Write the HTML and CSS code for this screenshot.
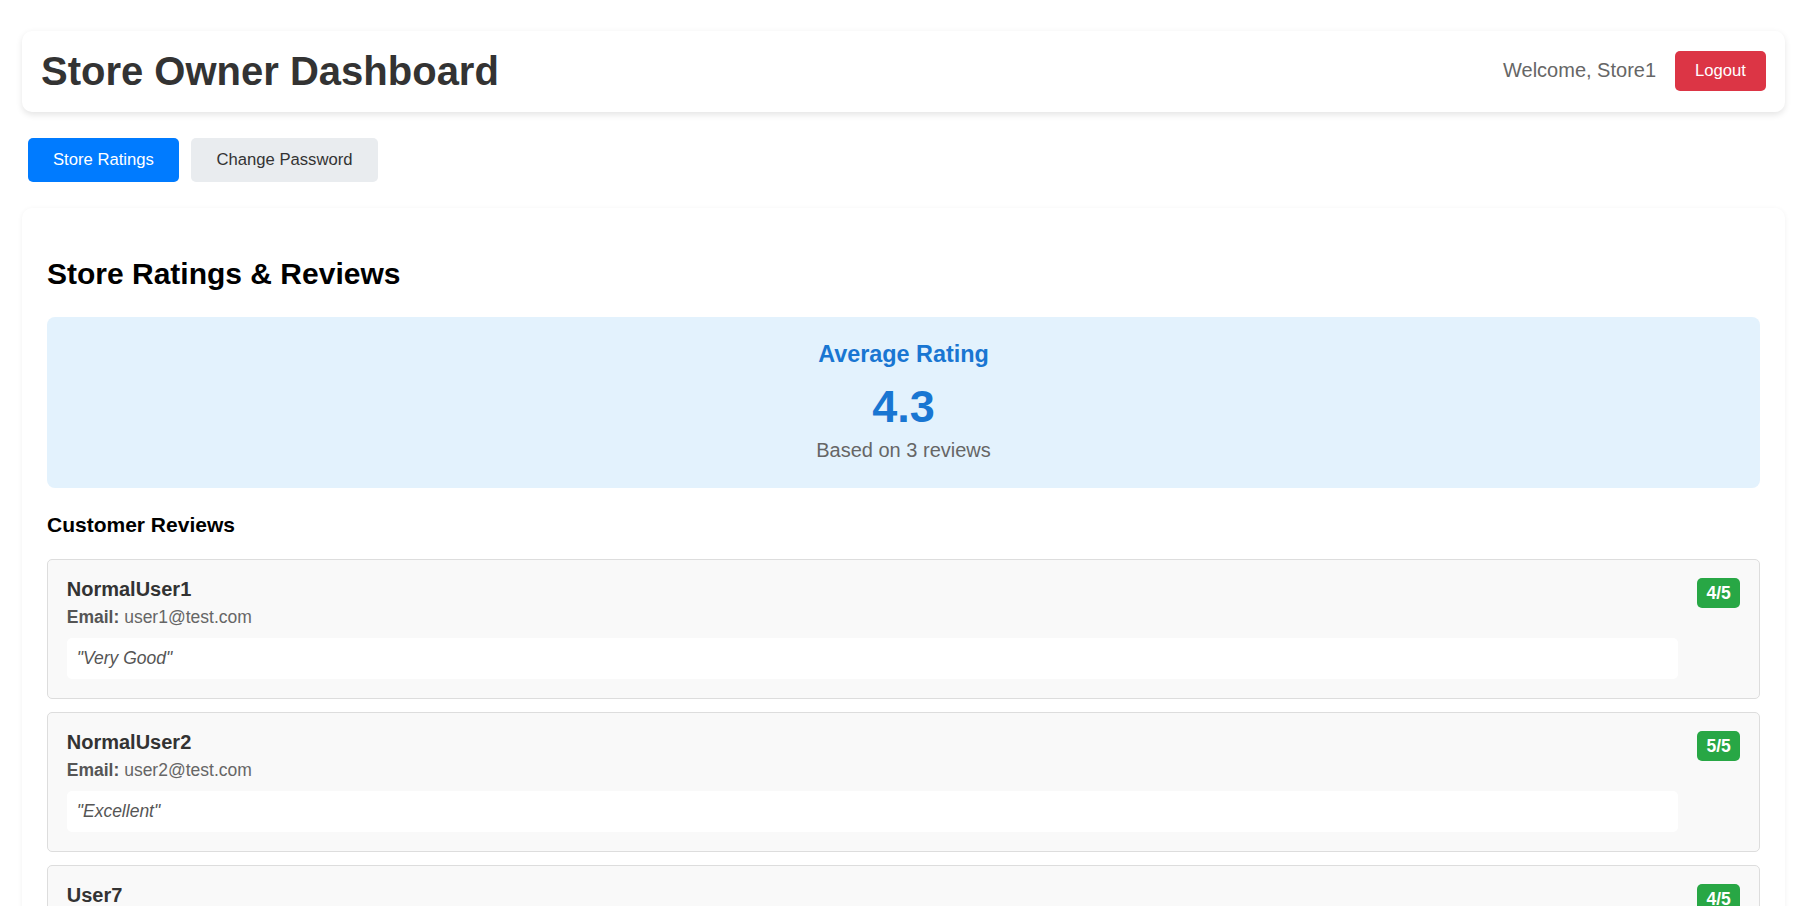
FILE: index.html
```html
<!DOCTYPE html>
<html lang="en">
<head>
<meta charset="utf-8">
<title>Store Owner Dashboard</title>
<link rel="stylesheet" href="styles.css">
</head>
<body>
<div class="page">
  <header class="topbar">
    <h1 class="title">Store Owner Dashboard</h1>
    <div class="user-area">
      <span class="welcome">Welcome, Store1</span>
      <button class="btn-logout">Logout</button>
    </div>
  </header>

  <nav class="tabs">
    <button class="tab tab-active">Store Ratings</button>
    <button class="tab">Change Password</button>
  </nav>

  <main class="panel">
    <h2 class="panel-title">Store Ratings &amp; Reviews</h2>

    <section class="summary">
      <h3 class="summary-label">Average Rating</h3>
      <div class="summary-value">4.3</div>
      <p class="summary-sub">Based on 3 reviews</p>
    </section>

    <h3 class="reviews-title">Customer Reviews</h3>

    <div class="reviews">
      <div class="review">
        <div class="review-body">
          <h4 class="review-name">NormalUser1</h4>
          <p class="review-email"><strong>Email:</strong> user1@test.com</p>
          <p class="review-comment">"Very Good"</p>
        </div>
        <span class="badge">4/5</span>
      </div>
      <div class="review">
        <div class="review-body">
          <h4 class="review-name">NormalUser2</h4>
          <p class="review-email"><strong>Email:</strong> user2@test.com</p>
          <p class="review-comment">"Excellent"</p>
        </div>
        <span class="badge">5/5</span>
      </div>
      <div class="review">
        <div class="review-body">
          <h4 class="review-name">User7</h4>
          <p class="review-email"><strong>Email:</strong> user7@test.com</p>
          <p class="review-comment">"Good"</p>
        </div>
        <span class="badge">4/5</span>
      </div>
    </div>
  </main>
</div>
</body>
</html>
```

FILE: styles.css
```css
* {
  box-sizing: border-box;
}

html, body {
  margin: 0;
  padding: 0;
  background: #ffffff;
}

body {
  font-family: "Liberation Sans", Arial, Helvetica, sans-serif;
  color: #000;
}

.page {
  padding: 31px 31px 40px 22px;
}

.topbar {
  display: flex;
  align-items: center;
  justify-content: space-between;
  background: #fff;
  border-radius: 10px;
  box-shadow: 0 2.5px 6px rgba(0, 0, 0, 0.1);
  padding: 17px 19px 18px;
  margin-bottom: 26px;
}

.title {
  margin: 0;
  font-size: 40px;
  line-height: 46px;
  font-weight: 700;
  color: #333;
}

.user-area {
  display: flex;
  align-items: center;
  gap: 19px;
}

.welcome {
  font-size: 20px;
  color: #666;
}

.btn-logout {
  font-family: inherit;
  font-size: 16.67px;
  line-height: 19.2px;
  color: #fff;
  background: #dc3545;
  border: none;
  border-radius: 5px;
  padding: 10px 20px;
}

.tabs {
  display: flex;
  gap: 12.5px;
  margin: 0 6px 26px;
}

.tab {
  font-family: inherit;
  font-size: 16.67px;
  line-height: 19.2px;
  color: #333;
  background: #e9ecef;
  border: none;
  border-radius: 5px;
  padding: 12px 25px 13px;
}

.tab-active {
  background: #007bff;
  color: #fff;
}

.panel {
  background: #fff;
  border-radius: 10px;
  box-shadow: 0 1px 5px rgba(0, 0, 0, 0.06);
  padding: 25px;
}

.panel-title {
  margin: 24px 0 25px;
  font-size: 30px;
  line-height: 34.5px;
  font-weight: 700;
  color: #000;
}

.summary {
  background: #e3f2fd;
  border-radius: 8px;
  padding: 24.5px 25px 26px;
  text-align: center;
  margin-bottom: 25px;
}

.summary-label {
  margin: 0 0 12.5px;
  font-size: 23.4px;
  line-height: 27px;
  font-weight: 700;
  color: #1976d2;
}

.summary-value {
  font-size: 45px;
  line-height: 51px;
  font-weight: 700;
  color: #1976d2;
  margin-bottom: 7px;
}

.summary-sub {
  margin: 0;
  font-size: 20px;
  line-height: 23px;
  color: #666;
}

.reviews-title {
  margin: 0 0 22px;
  font-size: 21px;
  line-height: 24px;
  font-weight: 700;
  color: #000;
}

.reviews {
  display: flex;
  flex-direction: column;
  gap: 13px;
}

.review {
  display: flex;
  align-items: flex-start;
  background: #f9f9f9;
  border: 1px solid #ddd;
  border-radius: 5px;
  padding: 18.75px;
}

.review-body {
  flex: 1;
}

.review-name {
  margin: 0 0 6px;
  font-size: 20px;
  line-height: 23px;
  font-weight: 700;
  color: #333;
}

.review-email {
  margin: 0 0 10.5px;
  font-size: 17.5px;
  line-height: 20px;
  color: #666;
}

.review-email strong {
  color: #555;
}

.review-comment {
  margin: 0;
  background: #fff;
  border-radius: 5px;
  padding: 10px 10px;
  font-size: 17.5px;
  line-height: 21px;
  font-style: italic;
  color: #555;
}

.badge {
  margin-left: 19px;
  background: #28a745;
  color: #fff;
  font-weight: 700;
  font-size: 17.5px;
  line-height: 20px;
  padding: 5px 9.5px;
  border-radius: 5px;
}
```
